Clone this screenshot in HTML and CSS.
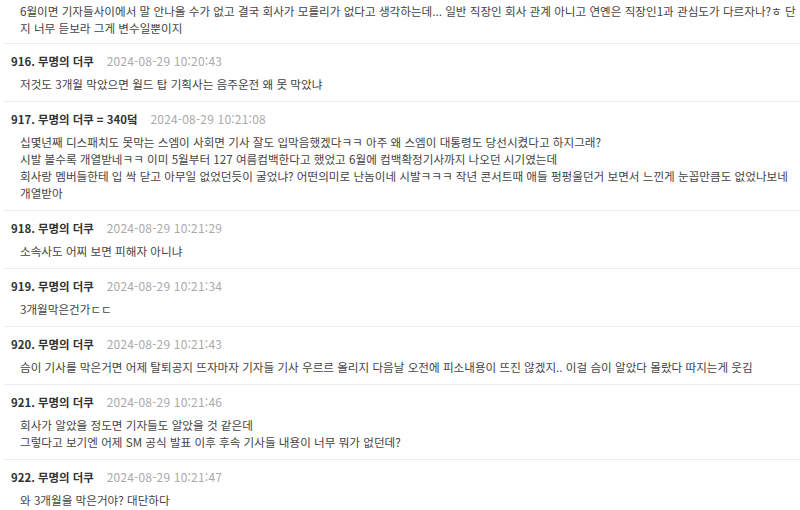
FILE: index.html
```html
<!DOCTYPE html>
<html lang="ko">
<head>
<meta charset="utf-8">
<title>댓글</title>
<link rel="stylesheet" href="styles.css">
</head>
<body>
<div class="comments">
  <div class="comment comment-cut">
    <div class="body">6월이면 기자들사이에서 말 안나올 수가 없고 결국 회사가 모를리가 없다고 생각하는데... 일반 직장인 회사 관계 아니고 연옌은 직장인1과 관심도가 다르자나?ㅎ 단<br>지 너무 듣보라 그게 변수일뿐이지</div>
  </div>
  <div class="comment">
    <div class="head"><span class="name">916. 무명의 더쿠</span><span class="date">2024-08-29 10:20:43</span></div>
    <div class="body">저것도 3개월 막았으면 월드 탑 기획사는 음주운전 왜 못 막았냐</div>
  </div>
  <div class="comment">
    <div class="head"><span class="name">917. 무명의 더쿠 = 340덬</span><span class="date">2024-08-29 10:21:08</span></div>
    <div class="body">십몇년째 디스패치도 못막는 스엠이 사회면 기사 잘도 입막음했겠다ㅋㅋ 아주 왜 스엠이 대통령도 당선시켰다고 하지그래?<br>시발 볼수록 개열받네ㅋㅋ 이미 5월부터 127 여름컴백한다고 했었고 6월에 컴백확정기사까지 나오던 시기였는데<br>회사랑 멤버들한테 입 싹 닫고 아무일 없었던듯이 굴었냐? 어떤의미로 난놈이네 시발ㅋㅋㅋ 작년 콘서트때 애들 펑펑울던거 보면서 느낀게 눈꼽만큼도 없었나보네<br>개열받아</div>
  </div>
  <div class="comment">
    <div class="head"><span class="name">918. 무명의 더쿠</span><span class="date">2024-08-29 10:21:29</span></div>
    <div class="body">소속사도 어찌 보면 피해자 아니냐</div>
  </div>
  <div class="comment">
    <div class="head"><span class="name">919. 무명의 더쿠</span><span class="date">2024-08-29 10:21:34</span></div>
    <div class="body">3개월막은건가ㄷㄷ</div>
  </div>
  <div class="comment">
    <div class="head"><span class="name">920. 무명의 더쿠</span><span class="date">2024-08-29 10:21:43</span></div>
    <div class="body">슴이 기사를 막은거면 어제 탈퇴공지 뜨자마자 기자들 기사 우르르 올리지 다음날 오전에 피소내용이 뜨진 않겠지.. 이걸 슴이 알았다 몰랐다 따지는게 웃김</div>
  </div>
  <div class="comment">
    <div class="head"><span class="name">921. 무명의 더쿠</span><span class="date">2024-08-29 10:21:46</span></div>
    <div class="body">회사가 알았을 정도면 기자들도 알았을 것 같은데<br>그렇다고 보기엔 어제 SM 공식 발표 이후 후속 기사들 내용이 너무 뭐가 없던데?</div>
  </div>
  <div class="comment">
    <div class="head"><span class="name">922. 무명의 더쿠</span><span class="date">2024-08-29 10:21:47</span></div>
    <div class="body">와 3개월을 막은거야? 대단하다</div>
  </div>
</div>
</body>
</html>
```
FILE: styles.css
```css
html, body {
  margin: 0;
  padding: 0;
  background: #ffffff;
}
body {
  font-family: "Noto Sans CJK KR", "Noto Sans", sans-serif;
  font-size: 11.6px;
  color: #444;
}
.comments {
  padding-left: 4px;
}
.comment {
  border-top: 1px solid #ececec;
  padding: 8px 0 8px 7px;
}
.comment-cut {
  border-top: 0;
  padding-top: 3px;
  padding-bottom: 6px;
}
.head {
  display: flex;
  align-items: baseline;
  gap: 13px;
  height: 17px;
  line-height: 17px;
  margin-bottom: 7px;
}
.name {
  font-weight: 700;
  color: #333;
  font-size: 11.4px;
}
.date {
  font-size: 12px;
  letter-spacing: 0.2px;
  color: #aaa;
}
.body {
  padding-left: 9px;
  line-height: 17px;
  white-space: nowrap;
}
```
